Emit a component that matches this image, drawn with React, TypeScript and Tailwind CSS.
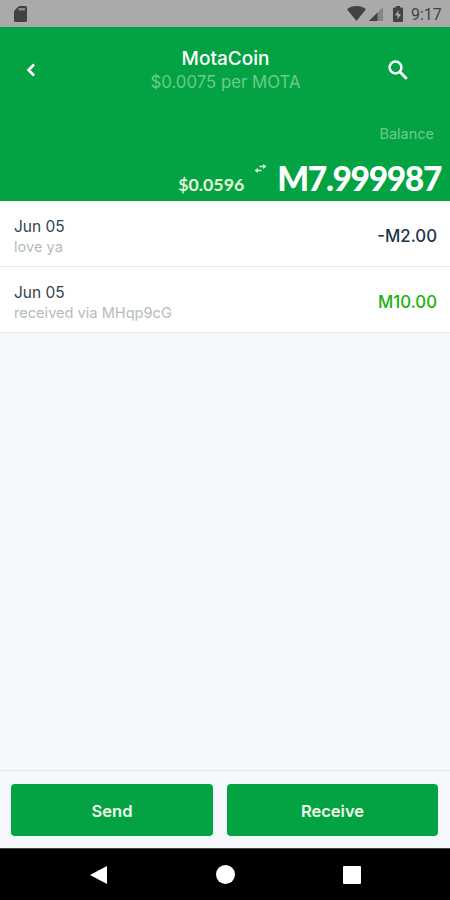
type Transaction = {
  id: number;
  date: string;
  note: string;
  amount: string;
  incoming: boolean;
};

const transactions: Transaction[] = [
  { id: 1, date: "Jun 05", note: "love ya", amount: "-M2.00", incoming: false },
  {
    id: 2,
    date: "Jun 05",
    note: "received via MHqp9cG",
    amount: "M10.00",
    incoming: true,
  },
];

function StatusBar() {
  return (
    <div className="flex h-[27px] shrink-0 items-center bg-[#aaaaaa] pl-[14px] pr-[9px] text-[#424242]">
      <svg width="13" height="16" viewBox="0 0 13 16" fill="currentColor">
        <path d="M5 0H11.5Q13 0 13 1.5V14.5Q13 16 11.5 16H1.5Q0 16 0 14.5V5Z" />
        <path d="M4.500 2H11V4.500H4.500Z" fill="#8d8d8d" />
      </svg>
      <svg
        className="ml-auto"
        width="19"
        height="15"
        viewBox="0 0 19 15"
        fill="currentColor"
      >
        <path d="M9.500 15L0 3.200Q4 0 9.500 0T19 3.200Z" />
      </svg>
      <svg className="ml-[3px]" width="14" height="14" viewBox="0 0 14 14">
        <path d="M14 0V14H0Z" fill="#858585" />
        <path d="M8.500 5.500V14H0Z" fill="currentColor" />
      </svg>
      <svg
        className="ml-[10px]"
        width="10"
        height="16"
        viewBox="0 0 10 16"
        fill="currentColor"
      >
        <path
          fillRule="evenodd"
          d="M3 0H7V1.500H9Q10 1.500 10 2.500V15Q10 16 9 16H1Q0 16 0 15V2.500Q0 1.500 1 1.500H3ZM5.500 4L2 9.500H4.500V13.500L8 8H5.500Z"
        />
      </svg>
      <span className="ml-[8px] w-[30px] whitespace-nowrap pt-[2px] font-[Roboto,sans-serif] text-[16px] leading-none">
        9:17
      </span>
    </div>
  );
}

function Header() {
  return (
    <header className="flex h-[174px] shrink-0 flex-col bg-[#03a344] text-white">
      <div className="flex h-[86px] items-center pl-[26px] pr-[42px]">
        <button aria-label="Back" className="w-5">
          <svg width="10" height="14" viewBox="0 0 10 14" fill="none">
            <path d="M8 1.500L2.500 7L8 12.500" stroke="white" strokeWidth="2.600" />
          </svg>
        </button>
        <div className="flex-1 pl-[17px] pt-px text-center">
          <h1 className="text-[19px] font-medium leading-[23px]">MotaCoin</h1>
          <p className="text-[16.800px] leading-[24px] text-[#6dca8c]">
            $0.0075 per MOTA
          </p>
        </div>
        <button aria-label="Search" className="w-5">
          <svg width="20" height="20" viewBox="0 0 20 20" fill="none">
            <circle cx="7.500" cy="7.500" r="5.900" stroke="white" strokeWidth="2.500" />
            <path d="M12 12L18.700 18.700" stroke="white" strokeWidth="3" />
          </svg>
        </button>
      </div>
      <p className="mt-[10px] pr-4 text-right text-[14.500px] leading-[22px] text-[#6dca8c]">
        Balance
      </p>
      <div className="mt-[11px] flex items-start justify-end pr-[9px] font-[Lato,sans-serif]">
        <span className="pt-[17px] text-[17.800px] font-bold leading-[22px] text-[#e3f6d5]">
          $0.0596
        </span>
        <svg
          className="ml-[10px] mt-[8px]"
          width="13"
          height="9"
          viewBox="0 0 13 9"
          fill="#e3f6d5"
        >
          <path d="M5.500 1.700H9V0L12.500 2.500L9 5V3.300H5.500ZM7.500 7.300H4V9L0.500 6.500L4 4V5.700H7.500Z" />
        </svg>
        <span className="ml-[10px] text-[33.500px] font-black leading-[44px] tracking-[-1.35px]">
          M7.999987
        </span>
      </div>
    </header>
  );
}

function TransactionRow({ transaction }: { transaction: Transaction }) {
  return (
    <li className="flex h-[66px] items-center justify-between border-b border-[#e6e8e9] bg-white pl-[14px] pr-[13px] pt-[5px]">
      <div>
        <p className="pt-px text-[15.500px] leading-[20px] text-[#32444f]">
          {transaction.date}
        </p>
        <p className="text-[14.600px] leading-[20px] text-[#b4bbc0]">
          {transaction.note}
        </p>
      </div>
      <span
        className={`pt-px text-[16.800px] font-medium ${
          transaction.incoming ? "text-[#1fb00f]" : "text-[#1c3549]"
        }`}
      >
        {transaction.amount}
      </span>
    </li>
  );
}

function NavigationBar() {
  return (
    <nav className="flex h-[52px] shrink-0 items-center justify-between border-t border-[#444444] bg-black pl-[90px] pr-[89px]">
      <svg width="18" height="18" viewBox="0 0 18 18" fill="white">
        <path d="M17 0V18L0 9Z" />
      </svg>
      <div className="h-[19px] w-[19px] rounded-full bg-white" />
      <div className="h-[18px] w-[18px] rounded-[1px] bg-white" />
    </nav>
  );
}

export default function App() {
  return (
    <div className="flex h-[900px] w-[450px] flex-col overflow-hidden bg-[#f4f8fa] font-[Inter,sans-serif]">
      <StatusBar />
      <Header />

      {/* Transactions */}
      <ul className="flex-1">
        {transactions.map((transaction) => (
          <TransactionRow key={transaction.id} transaction={transaction} />
        ))}
      </ul>

      {/* Actions */}
      <div className="flex h-[78px] shrink-0 gap-[14px] border-t border-[#e3e8ea] pl-[11px] pr-[12px] pt-[13px] text-[16.500px] font-semibold text-[#f0fbe9]">
        <button className="h-[52px] w-[202px] rounded-[4px] bg-[#03a344] pt-[3px]">
          Send
        </button>
        <button className="h-[52px] flex-1 rounded-[4px] bg-[#03a344] pt-[3px]">
          Receive
        </button>
      </div>

      <NavigationBar />
    </div>
  );
}
